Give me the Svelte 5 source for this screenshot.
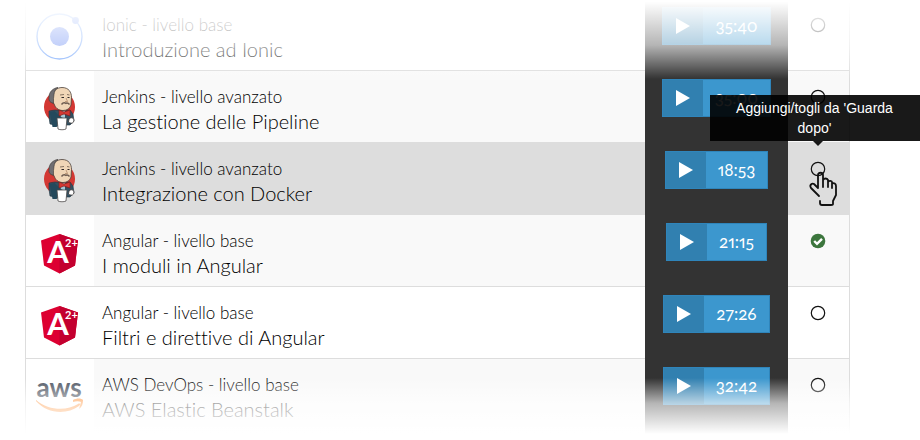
<script>
  let lessons = $state([
    { id: 1, logo: 'ionic', course: 'Ionic - livello base', title: 'Introduzione ad Ionic', duration: '35:40', saved: false },
    { id: 2, logo: 'jenkins', course: 'Jenkins - livello avanzato', title: 'La gestione delle Pipeline', duration: '35:00', saved: false },
    { id: 3, logo: 'jenkins', course: 'Jenkins - livello avanzato', title: 'Integrazione con Docker', duration: '18:53', saved: false },
    { id: 4, logo: 'angular', course: 'Angular - livello base', title: 'I moduli in Angular', duration: '21:15', saved: true },
    { id: 5, logo: 'angular', course: 'Angular - livello base', title: 'Filtri e direttive di Angular', duration: '27:26', saved: false },
    { id: 6, logo: 'aws', course: 'AWS DevOps - livello base', title: 'AWS Elastic Beanstalk', duration: '32:42', saved: false }
  ]);
  let active = $state(3);

  function toggle(lesson) {
    lesson.saved = !lesson.saved;
    active = lesson.id;
  }
</script>

{#snippet logo(name)}
  <svg class="logo" viewBox="0 0 50 50" aria-hidden="true">
    {#if name === 'ionic'}
      <circle cx="24.5" cy="25.5" r="22.5" fill="none" stroke="#6ea2fc" stroke-width="1.3" />
      <circle cx="24.5" cy="25.5" r="9.5" fill="#5c80f2" />
      <circle cx="40.5" cy="9.5" r="3.4" fill="#6f95f8" />
    {:else if name === 'jenkins'}
      <ellipse cx="24.5" cy="24" rx="15.5" ry="16" fill="#d33833" />
      <path d="M14 28l6-1 9 1 6-1 3 4 1 7-4 4H20l-5-1-1-7z" fill="#335061" stroke="#1d3440" stroke-width=".6" />
      <path d="M14.5 29l5-1 6 6v7l-4 3h-4z" fill="#24495c" />
      <path d="M24 28h6v8l-4-2z" fill="#a9c9d6" />
      <path d="M17 15c0-7 5-10.500 10-10.500 7 0 9.500 5 9.500 10L36 22c-1 3.500-4 5.500-8 5.500-5 0-8-3-9-7-3 0-3-4-2-5.500z" fill="#f0d6b7" stroke="#4a3f38" stroke-width=".8" />
      <path d="M18.500 20c-3 0-5-2-4.500-6 0-5 4-9 9-9.500-3 2-3.500 4-4 7l-.5 4z" fill="#6f6e72" stroke="#3b3533" stroke-width=".6" />
      <path d="M25 12l4-.5M32 11.500l2.500.5" fill="none" stroke="#6b5a4c" stroke-width=".8" />
      <path d="M26.500 14.500h2.500M32.500 14.500h2" fill="none" stroke="#2b2523" stroke-width="1" />
      <path d="M31 15l1.500 3.500H30" fill="none" stroke="#b0896a" stroke-width=".8" />
      <path d="M26.500 21.500c1.500-2 3-2 4.500-1.200 1.500-.6 2.500 0 3.500 1.200" fill="none" stroke="#6d5b50" stroke-width="1.500" />
      <path d="M24 27l5 2 6-2v6l-6-2-5 2z" fill="#d33833" stroke="#81201d" stroke-width=".7" />
      <path d="M34 36c3-3 6 0 4.500 3-1 2-4 1-5 0z" fill="#fff" stroke="#3b3533" stroke-width=".8" />
      <path d="M22 35h10l-1 11c-2 1-6 1-8 0z" fill="#fff" stroke="#4c4a4a" stroke-width=".8" />
    {:else if name === 'angular'}
      <path d="M24.5 7L43 13.500l-3 25-15.500 8L9 38.500l-3-25z" fill="#dd0031" />
      <path d="M24.500 7L43 13.500l-3 25-15.500 8z" fill="#c3002f" />
      <text class="angular-a" x="23" y="36" text-anchor="middle">A</text>
      <text class="angular-version" x="30" y="20">2+</text>
    {:else}
      <text class="aws-name" x="24" y="26" text-anchor="middle">aws</text>
      <path d="M1 29c13 11 31 11 42 4 2-1 3 0 1 2-12 9-32 8-43-5z" fill="#ff8b2c" />
      <path d="M38 29c4-2 8-2 10 0 0 4-1 7-4 9l2-7c-2-1-5-1-8 0z" fill="#ff8b2c" />
    {/if}
  </svg>
{/snippet}

<main>
  <table>
    <tbody>
      {#each lessons as lesson (lesson.id)}
        <tr class:active={lesson.id === active}>
          <td class="logo-cell">{@render logo(lesson.logo)}</td>
          <td class="lesson">
            <div class="course">{lesson.course}</div>
            <div class="title">{lesson.title}</div>
          </td>
          <td class="watch">
            <button class="play" aria-label="Guarda {lesson.title}, {lesson.duration}">
              <span class="play-icon">
                <svg width="14" height="16" viewBox="0 0 14 16" aria-hidden="true"><path d="M0 0l14 8-14 8z" fill="#fff" /></svg>
              </span>
              <span class="duration">{lesson.duration}</span>
            </button>
          </td>
          <td class="later">
            <div class="later-wrap">
              <button
                class="toggle"
                aria-label="Aggiungi/togli da 'Guarda dopo'"
                aria-pressed={lesson.saved}
                onclick={() => toggle(lesson)}
              >
                <svg width="16" height="16" viewBox="0 0 16 16" aria-hidden="true">
                  {#if lesson.saved}
                    <circle cx="8" cy="8" r="7.300" fill="#3c763d" />
                    <path d="M4.200 8l2.800 2.800 5-5" fill="none" stroke="#fff" stroke-width="2.400" />
                  {:else}
                    <circle cx="8" cy="8" r="6.700" fill="none" stroke="#111" stroke-width="1.200" />
                  {/if}
                </svg>
              </button>
              {#if lesson.id === active}
                <div class="tooltip" role="tooltip">Aggiungi/togli da 'Guarda dopo'</div>
                <svg class="pointer" width="30" height="36" viewBox="0 0 30 36" aria-hidden="true">
                  <path
                    d="M11 25L3 17c-2-3 1-5 3-4l4 4V4c0-3 5-3 5 0v12V9c1-2 4-2 5 0v7-5c1-2 4-1 4 0v6-4c2-2 4 0 4 2v9l-3 6v3c0 1-1 1-2 1H14c-1 0-2 0-2-2v-2"
                    fill="none" stroke="#111" stroke-width="1.800" stroke-linecap="round" stroke-linejoin="round"
                  />
                </svg>
              {/if}
            </div>
          </td>
        </tr>
      {/each}
    </tbody>
  </table>
  <div class="fade fade-top"></div>
  <div class="fade fade-bottom"></div>
</main>

<style>
  :global(body) {
    background: #fff;
  }

  main {
    position: relative;
    overflow: hidden;
    padding: 0 70px 0 25px;
    font-family: Lato, sans-serif;
    font-variant-ligatures: none;
    color: #000;
  }

  table {
    width: 100%;
    margin-top: -2px;
    border-spacing: 0;
    border: 0 solid #ddd;
    border-width: 0 1px;
  }

  td {
    box-sizing: border-box;
    height: 72px;
    padding: 0;
    border-top: 1px solid #ddd;
    vertical-align: top;
  }

  tr:last-child td {
    height: 76px;
  }

  tr:nth-child(even) td {
    background: #f9f9f9;
  }

  tr:nth-child(even) .logo-cell {
    background: #fff;
  }

  tr.active td,
  tr.active .logo-cell {
    background: #ddd;
  }

  .logo-cell {
    width: 68px;
    padding: 12px 9px 0;
  }

  .logo {
    display: block;
    width: 50px;
    height: 50px;
  }

  .angular-a {
    font: bold 31px Lato, sans-serif;
    fill: #fff;
  }

  .angular-version {
    font: bold 11px Lato, sans-serif;
    fill: #fff;
  }

  .aws-name {
    font: bold 26px Lato, sans-serif;
    fill: #4a5260;
  }

  .lesson {
    padding: 14px 8px 0;
    line-height: 24px;
    font-weight: 300;
  }

  .course {
    font-size: 17px;
  }

  .title {
    font-size: 20px;
  }

  tr .watch,
  tr:nth-child(even) .watch,
  tr.active .watch {
    width: 143px;
    padding-top: 8px;
    background: #333;
    border-color: #333;
    text-align: center;
  }

  .play {
    display: inline-flex;
    height: 38px;
    padding: 0;
    border: 1px solid #2f85bb;
    background: #3c97ce;
    color: #fff;
    font: 17px Lato, sans-serif;
    font-variant-numeric: oldstyle-nums proportional-nums;
    cursor: pointer;
  }

  .play-icon {
    display: flex;
    align-items: center;
    justify-content: center;
    width: 40px;
    background: #3180b0;
  }

  .duration {
    padding: 0 12px;
    line-height: 36px;
  }

  .later {
    width: 61px;
    padding: 18px 2px 0 0;
  }

  .later-wrap {
    position: relative;
    width: 16px;
    margin: 0 auto;
  }

  .toggle {
    display: block;
    padding: 0;
    border: 0;
    background: none;
    cursor: pointer;
  }

  .toggle svg {
    display: block;
  }

  .tooltip {
    position: absolute;
    right: -94px;
    bottom: 36px;
    z-index: 2;
    box-sizing: border-box;
    width: 210px;
    padding: 3px 20px;
    background: rgba(0, 0, 0, 0.9);
    color: #fff;
    font: 14px/20px "Liberation Sans", Arial, sans-serif;
    text-align: center;
  }

  .tooltip::after {
    content: "";
    position: absolute;
    top: 100%;
    right: 97px;
    border: 5px solid transparent;
    border-top-color: rgba(0, 0, 0, 0.9);
    border-bottom: 0;
  }

  .pointer {
    position: absolute;
    top: 10px;
    left: -2px;
    pointer-events: none;
  }

  .fade {
    position: absolute;
    left: 0;
    right: 0;
    pointer-events: none;
  }

  .fade-top {
    top: 0;
    height: 79px;
    background: linear-gradient(#fff 2%, rgba(255, 255, 255, 0.64) 57%, rgba(255, 255, 255, 0));
  }

  .fade-bottom {
    bottom: 0;
    height: 56px;
    background: linear-gradient(rgba(255, 255, 255, 0), rgba(255, 255, 255, 0.64) 45%, #fff);
  }
</style>
